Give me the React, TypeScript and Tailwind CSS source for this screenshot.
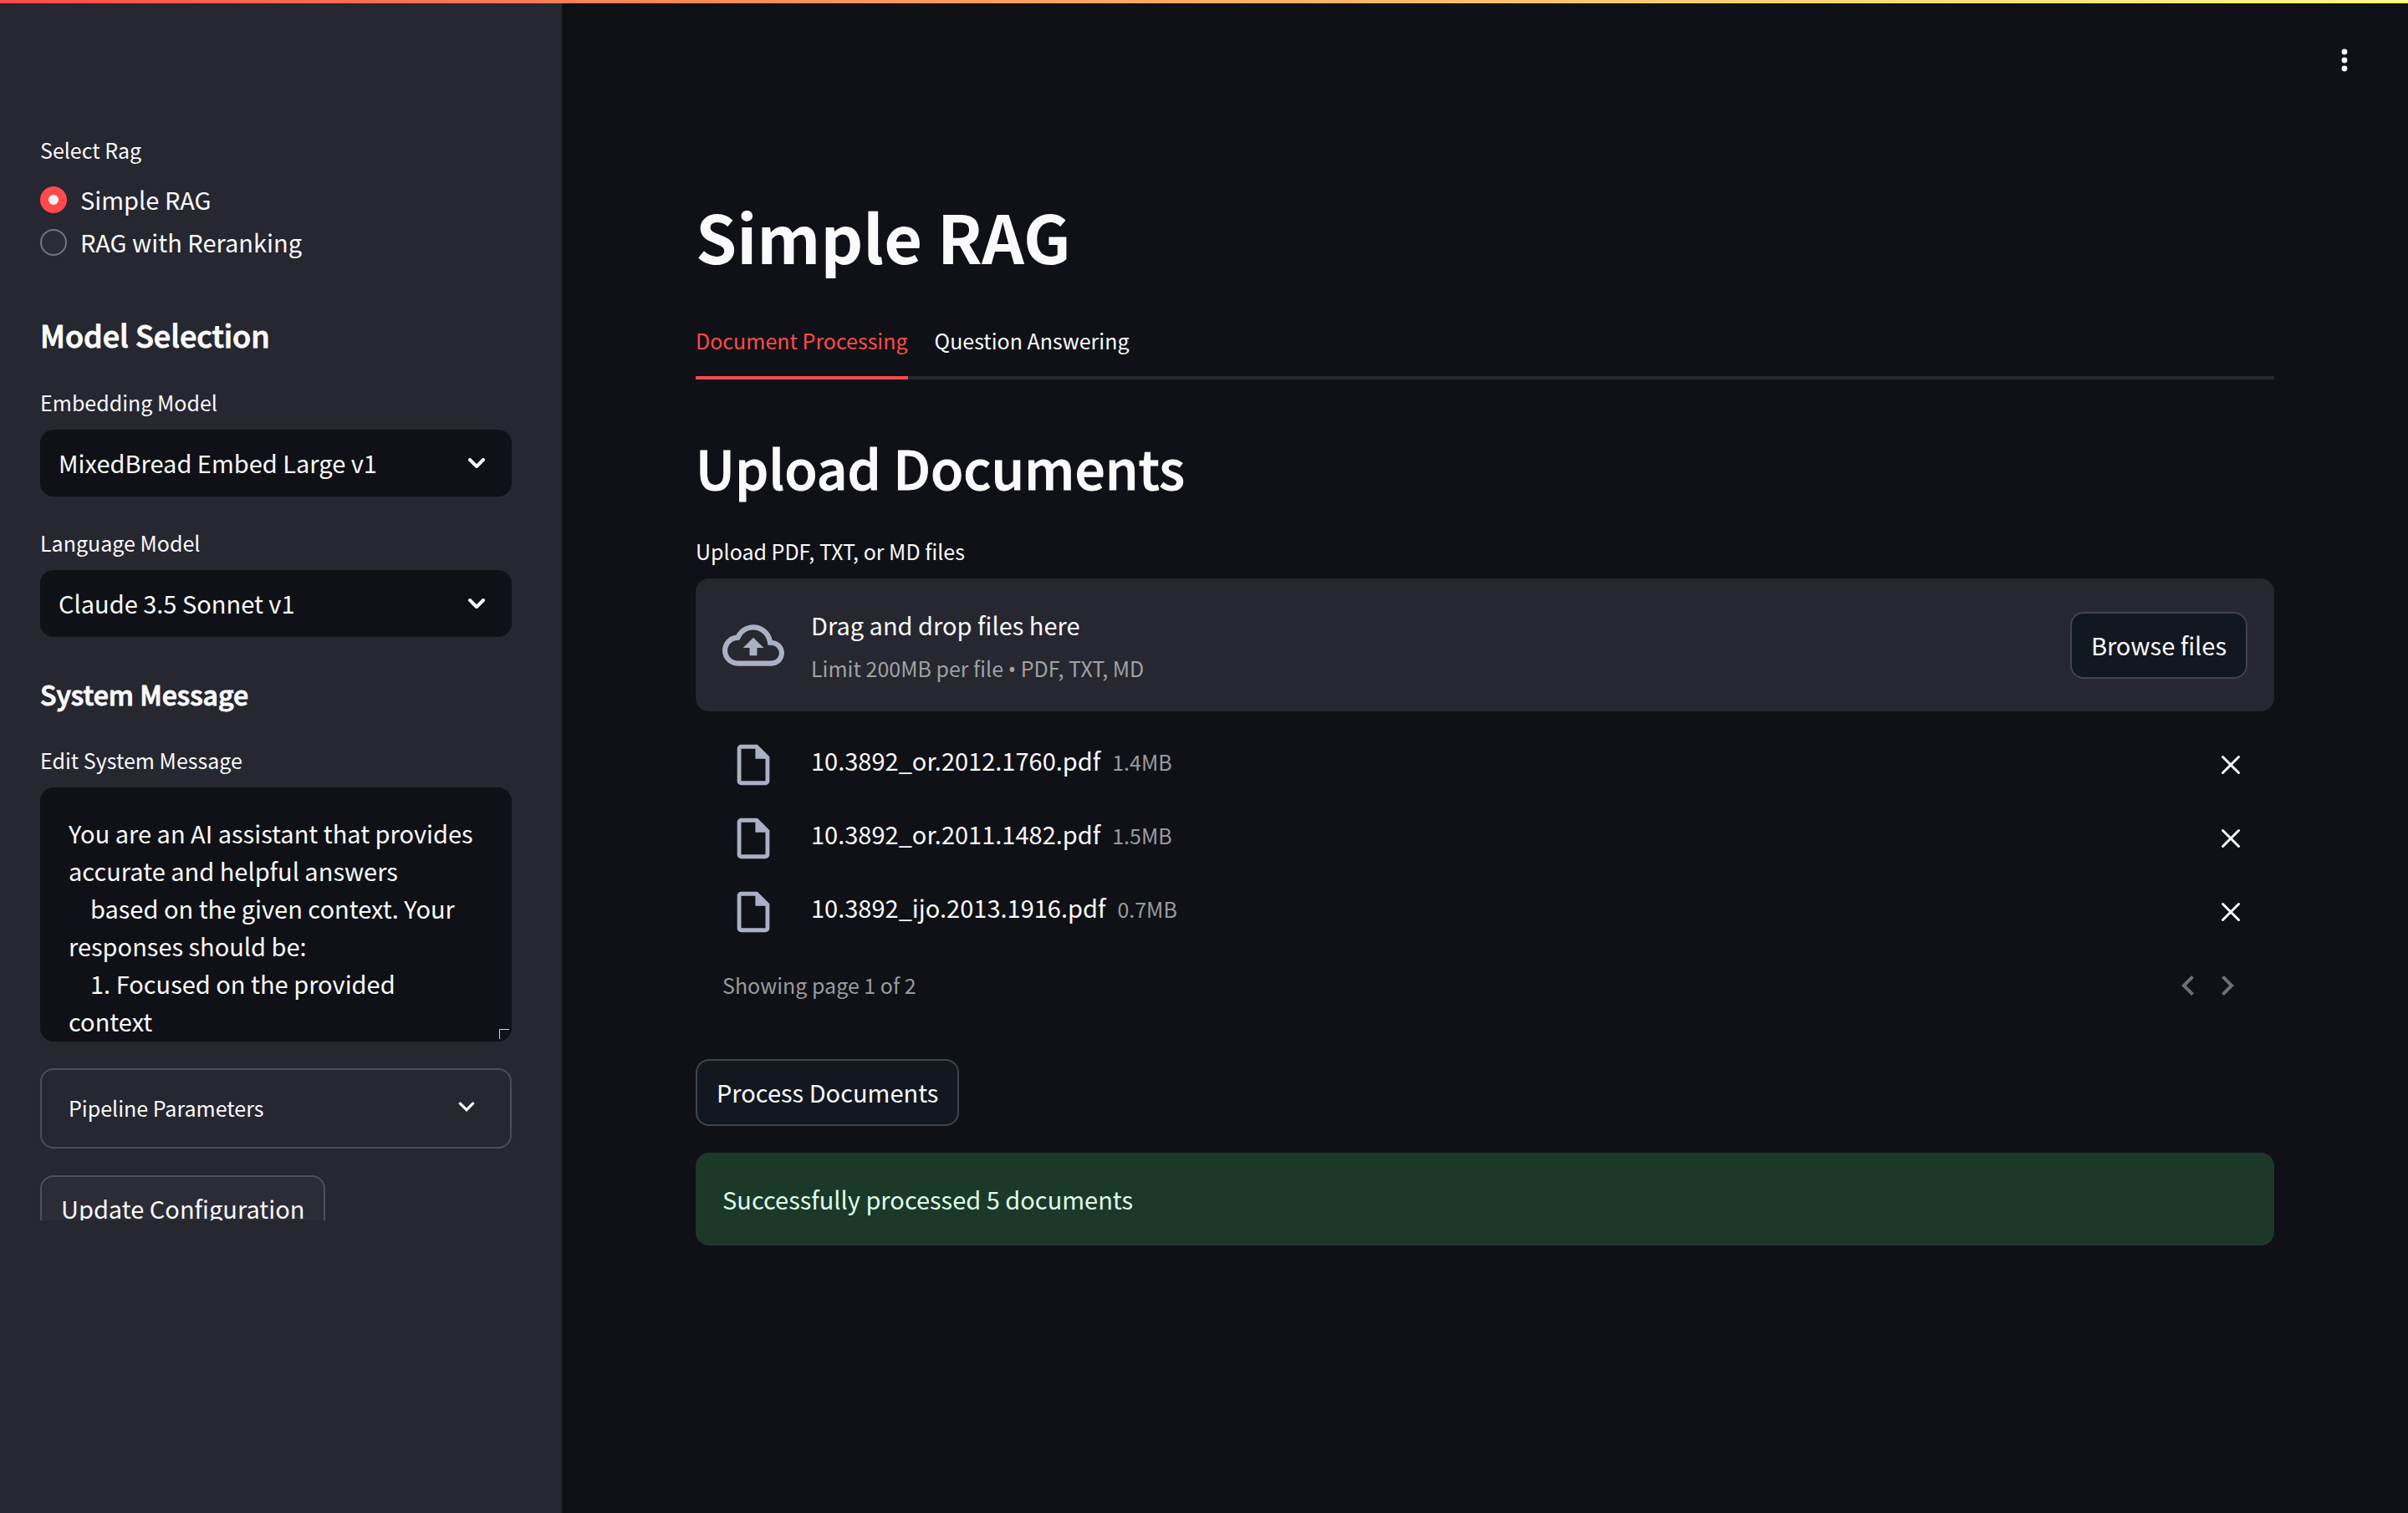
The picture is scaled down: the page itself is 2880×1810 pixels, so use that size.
import { useState, type ReactNode } from "react";

const FILES = [
  { name: "10.3892_or.2012.1760.pdf", size: "1.4MB" },
  { name: "10.3892_or.2011.1482.pdf", size: "1.5MB" },
  { name: "10.3892_ijo.2013.1916.pdf", size: "0.7MB" },
];

const RAG_MODES = ["Simple RAG", "RAG with Reranking"];

const SYSTEM_MESSAGE = `You are an AI assistant that provides accurate and helpful answers
    based on the given context. Your responses should be:
    1. Focused on the provided context
    2. Accurate and factual`;

function SelectChevron() {
  return (
    <svg viewBox="0 0 20 12" aria-hidden="true" className="pointer-events-none absolute top-[34px] right-8 h-3 w-5" fill="none" stroke="currentColor" strokeWidth="4" strokeLinecap="round" strokeLinejoin="round">
      <path d="M2 2l8 8 8-8" />
    </svg>
  );
}

function ExpandIcon() {
  return (
    <svg viewBox="6 8.59 12 7.41" aria-hidden="true" className="mb-1 h-3 w-5" fill="currentColor">
      <path d="M16.59 8.59L12 13.17 7.41 8.59 6 10l6 6 6-6z" />
    </svg>
  );
}

function CloudUpload() {
  return (
    <svg viewBox="0 0 24 24" aria-hidden="true" className="size-[74px] shrink-0 text-[#acb0c5]" fill="currentColor">
      <path d="M19.35 10.04A7.49 7.49 0 0012 4C9.11 4 6.6 5.64 5.35 8.04A5.994 5.994 0 000 14c0 3.31 2.69 6 6 6h13c2.76 0 5-2.24 5-5 0-2.64-2.05-4.78-4.65-4.96zM19 18H6c-2.21 0-4-1.79-4-4 0-2.05 1.53-3.76 3.56-3.97l1.07-.11.5-.95A5.469 5.469 0 0112 6c2.62 0 4.88 1.86 5.39 4.43l.3 1.5 1.53.11A2.98 2.98 0 0122 15c0 1.65-1.35 3-3 3zM8 13h2.55v3h2.9v-3H16l-4-4z" />
    </svg>
  );
}

function FileIcon() {
  return (
    <svg viewBox="0 0 24 24" aria-hidden="true" className="size-[58px] text-[#acb0c5]" fill="currentColor">
      <path d="M14 2H6c-1.1 0-1.99.9-1.99 2L4 20c0 1.1.89 2 1.99 2H18c1.1 0 2-.9 2-2V8l-6-6zM6 20V4h7v5h5v11H6z" />
    </svg>
  );
}

function SelectField({ id, label, value }: { id: string; label: string; value: string }) {
  return (
    <div className="flex flex-col gap-[13px]">
      <label htmlFor={id} className="text-[25px] leading-10">{label}</label>
      <div className="relative">
        <select id={id} defaultValue={value} className="h-20 w-full appearance-none rounded-2xl bg-[#0f1116] pr-20 pl-[22px] text-[29px]">
          <option>{value}</option>
        </select>
        <SelectChevron />
      </div>
    </div>
  );
}

function OutlineButton({ children, className = "" }: { children: ReactNode; className?: string }) {
  return (
    <button type="button" className={`h-20 shrink-0 rounded-2xl border-2 px-[23px] text-[29px] ${className}`}>
      {children}
    </button>
  );
}

function Sidebar() {
  const [mode, setMode] = useState(RAG_MODES[0]);
  return (
    <aside className="flex w-[672px] shrink-0 flex-col bg-[#262730] px-12 pt-[155px] pb-[350px]">
      <div className="flex min-h-0 w-[564px] flex-1 flex-col overflow-hidden">
        <fieldset>
          <legend className="mb-3.5 text-[25px] leading-10">Select Rag</legend>
          {RAG_MODES.map((m) => (
            <label key={m} className="flex h-[51px] items-center gap-4 text-[29px]">
              <input
                type="radio"
                name="rag"
                checked={mode === m}
                onChange={() => setMode(m)}
                className="size-8 appearance-none rounded-full border-2 border-[#75767d] bg-[#2b2c36] checked:border-10 checked:border-[#ff4b4b] checked:bg-[#f0f2f6]"
              />
              {m}
            </label>
          ))}
        </fieldset>

        <h2 className="mt-[61px] mb-[37px] text-[36px] leading-12 font-medium [-webkit-text-stroke:1px]">Model Selection</h2>
        <div className="flex flex-col gap-[35px]">
          <SelectField id="embedding" label="Embedding Model" value="MixedBread Embed Large v1" />
          <SelectField id="language" label="Language Model" value="Claude 3.5 Sonnet v1" />
        </div>

        <h3 className="mt-11 mb-[35px] text-[32px] leading-12 font-medium [-webkit-text-stroke:1px]">System Message</h3>
        <label htmlFor="system" className="mb-[13px] text-[25px] leading-10">Edit System Message</label>
        <div className="relative shrink-0">
          <textarea
            id="system"
            defaultValue={SYSTEM_MESSAGE}
            className="block h-[304px] w-full resize-none overflow-hidden rounded-2xl bg-[#0f1116] pt-8 pr-10 pl-[34px] text-[29px] leading-[45px]"
          />
          <svg viewBox="0 0 14 14" aria-hidden="true" className="pointer-events-none absolute right-0.5 bottom-0.5 size-3.5" fill="none" stroke="#d5d5d8" strokeWidth="1">
            <path d="M1.5 13V1.5H13" />
          </svg>
        </div>

        <button type="button" aria-expanded="false" className="mt-8 flex h-24 shrink-0 items-center justify-between rounded-2xl border-2 border-[#4c4d55] pr-[42px] pl-8 text-[25px]">
          Pipeline Parameters
          <ExpandIcon />
        </button>
        <OutlineButton className="mt-8 self-start border-[#4f5059] bg-[#2b2c36]">Update Configuration</OutlineButton>
      </div>
    </aside>
  );
}

function FileRow({ name, size }: { name: string; size: string }) {
  return (
    <li className="flex h-22 items-center gap-8 px-8">
      <div className="flex w-[74px] justify-center">
        <FileIcon />
      </div>
      <div className="mb-3 flex flex-1 items-baseline gap-3.5">
        <span className="text-[29px] leading-12">{name}</span>
        <span className="text-[25px] text-[#9a9b9f]">{size}</span>
      </div>
      <button type="button" aria-label={`Remove ${name}`} className="flex size-10 items-center justify-center">
        <svg viewBox="0 0 24 24" aria-hidden="true" className="size-6" fill="none" stroke="currentColor" strokeWidth="3" strokeLinecap="round">
          <path d="M2.5 2.500l19 19M21.5 2.500l-19 19" />
        </svg>
      </button>
    </li>
  );
}

function PageButton({ label, viewBox, d }: { label: string; viewBox: string; d: string }) {
  return (
    <button type="button" aria-label={label} className="flex size-12 items-center justify-center text-[#6f7074]">
      <svg viewBox={viewBox} aria-hidden="true" className="h-6 w-[15px]" fill="currentColor">
        <path d={d} />
      </svg>
    </button>
  );
}

export default function App() {
  return (
    <div className="flex h-screen flex-col bg-[#0f1116] font-['Noto_Sans_CJK_SC','Noto_Sans',sans-serif] text-[#fafafa]">
      <div className="h-1 shrink-0 bg-linear-to-r from-[#ff4b4b] to-[#fffd80]" />
      <div className="flex min-h-0 flex-1">
        <Sidebar />
        <div className="flex min-w-0 flex-1 flex-col">
          <header className="flex h-[136px] items-center justify-end pr-14">
            <button type="button" aria-label="Main menu" className="flex size-10 items-center justify-center">
              <svg viewBox="0 0 8 28" aria-hidden="true" className="h-7 w-2" fill="currentColor">
                <circle cx="4" cy="4" r="3.400" />
                <circle cx="4" cy="14" r="3.400" />
                <circle cx="4" cy="24" r="3.400" />
              </svg>
            </button>
          </header>

          <main className="px-40 pt-[94px]">
            <h1 className="text-[79px] leading-24 font-bold">Simple RAG</h1>

            <div role="tablist" className="mt-9 flex gap-8 border-b-4 border-[#262730] text-[25px]">
              <button type="button" role="tab" aria-selected="true" className="-mb-1 h-22 border-b-4 border-[#ff4b4b] text-[#ff4b4b]">Document Processing</button>
              <button type="button" role="tab" aria-selected="false" className="-mb-1 h-22 border-b-4 border-transparent">Question Answering</button>
            </div>

            <h2 className="mt-16 text-[64px] leading-20 font-medium [-webkit-text-stroke:1px]">Upload Documents</h2>
            <p className="mt-[41px] mb-[13px] text-[25px] leading-10">Upload PDF, TXT, or MD files</p>

            <section aria-label="File dropzone" className="flex items-center gap-8 rounded-2xl bg-[#262730] px-8 py-7">
              <CloudUpload />
              <div className="flex flex-1 flex-col gap-1 pt-0.5">
                <span className="text-[29px] leading-[51px]">Drag and drop files here</span>
                <span className="text-[25px] leading-[45px] text-[#a0a0a5]">
                  Limit 200MB per file <span className="font-['Noto_Sans',sans-serif]">•</span> PDF, TXT, MD
                </span>
              </div>
              <OutlineButton className="border-[#41444c] bg-[#131720]">Browse files</OutlineButton>
            </section>

            <ul className="mt-5">
              {FILES.map((f) => (
                <FileRow key={f.name} {...f} />
              ))}
            </ul>
            <div className="flex h-22 items-center px-8">
              <span className="flex-1 text-[25px] text-[#9a9b9f]">Showing page 1 of 2</span>
              <PageButton label="Previous page" viewBox="8 6 7.41 12" d="M15.41 7.41L14 6l-6 6 6 6 1.41-1.41L10.83 12z" />
              <PageButton label="Next page" viewBox="8.59 6 7.41 12" d="M10 6L8.59 7.41 13.17 12l-4.58 4.59L10 18l6-6z" />
            </div>

            <OutlineButton className="mt-11 border-[#41444c] bg-[#131720]">Process Documents</OutlineButton>
            <div role="alert" className="mt-8 rounded-2xl bg-[#1c3829] p-8 text-[29px] leading-[47px] text-[#dffde9]">
              Successfully processed 5 documents
            </div>
          </main>
        </div>
      </div>
    </div>
  );
}
